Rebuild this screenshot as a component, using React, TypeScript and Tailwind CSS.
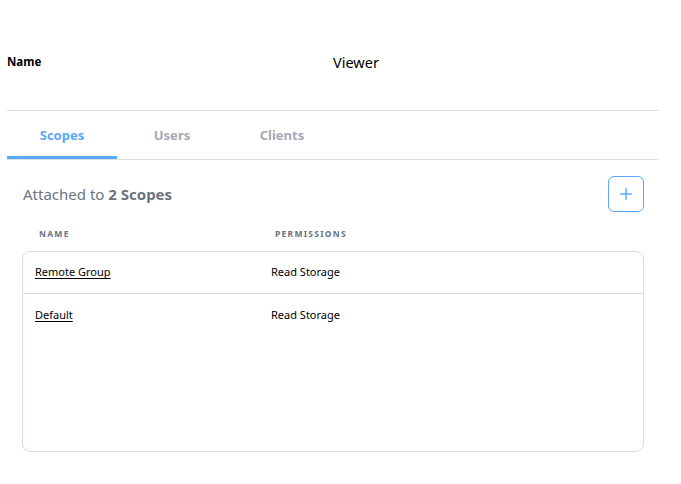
import { Plus } from "lucide-react"

type Scope = {
  name: string
  permission: string
}

const scopes: Scope[] = [
  { name: "Remote Group", permission: "Read Storage" },
  { name: "Default", permission: "Read Storage" },
]

const tabs = ["Scopes", "Users", "Clients"]

export default function App() {
  return (
    <div className="min-h-screen bg-white font-['Noto_Sans',sans-serif] text-black">
      <div className="ml-[7px] w-[652px]">
        <div className="flex items-center pt-[52px] leading-[20px]">
          <div className="w-[326px] text-[11.5px] font-bold">Name</div>
          <div className="text-[14.5px]">Viewer</div>
        </div>

        <div className="mt-[38px] border-t border-[#d9dde4]" />

        <div className="flex border-b border-[#d9dde4]">
          {tabs.map((tab, i) => (
            <div
              key={tab}
              className={
                i === 0
                  ? "flex h-[48px] w-[110px] items-center justify-center border-b-[3px] border-[#5aa9f8] pt-[5px] text-[13px] font-bold text-[#5aa9f8]"
                  : "flex h-[48px] w-[110px] items-center justify-center border-b-[3px] border-transparent pt-[5px] text-[13px] font-bold text-[#a3aab5]"
              }
            >
              {tab}
            </div>
          ))}
        </div>

        <div className="px-[15px]">
          <div className="mt-[16px] flex items-center justify-between">
            <div className="pl-px text-[15px] text-[#6b7380]">
              Attached to <span className="font-bold">2 Scopes</span>
            </div>
            <button className="flex size-9 items-center justify-center rounded-md border border-[#5aa9f8] text-[#5aa9f8]">
              <Plus className="size-[18px]" strokeWidth={2} />
            </button>
          </div>

          <div className="mt-[16px] flex h-[12px] items-center text-[8.5px] font-bold tracking-[0.15em] text-[#6b7380]">
            <div className="w-[253px] pl-[17px]">NAME</div>
            <div>PERMISSIONS</div>
          </div>

          <div className="mt-[11px] h-[201px] rounded-lg border border-[#d9dde4]">
            {scopes.map((scope, i) => (
              <div
                key={scope.name}
                className={
                  i < scopes.length - 1
                    ? "flex h-[42px] items-center border-b border-[#d9dde4] text-[11px]"
                    : "flex h-[42px] items-center text-[11px]"
                }
              >
                <div className="w-[248px] pl-[12px]">
                  <a href="#" className="underline underline-offset-2">
                    {scope.name}
                  </a>
                </div>
                <div>{scope.permission}</div>
              </div>
            ))}
          </div>
        </div>
      </div>
    </div>
  )
}
